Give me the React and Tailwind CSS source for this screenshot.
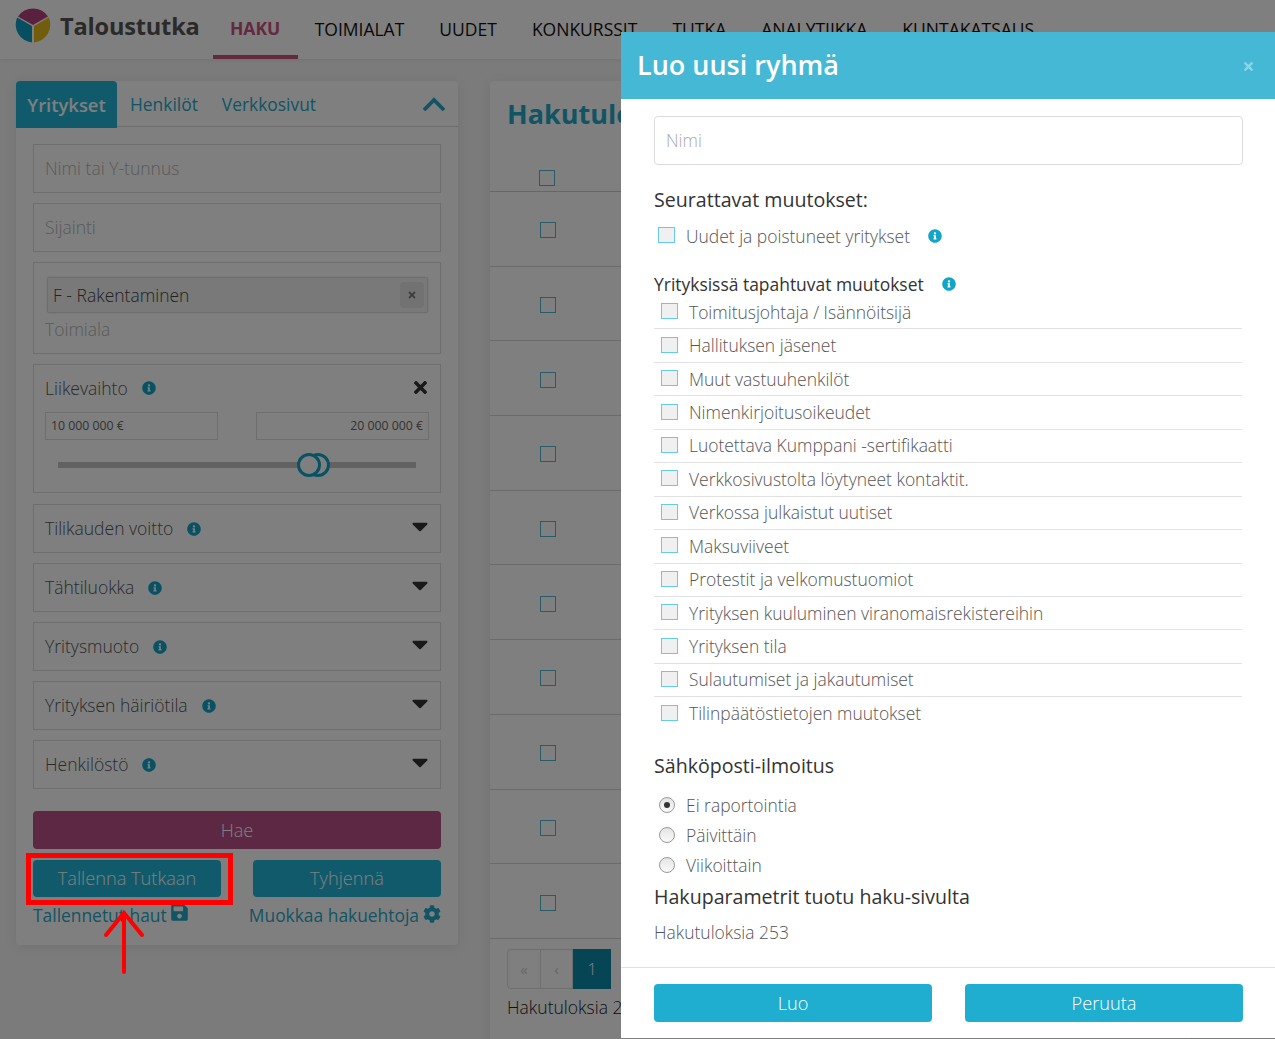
import { FaInfoCircle, FaCaretDown, FaTimes, FaSave, FaCog } from "react-icons/fa";

const navItems = ["TOIMIALAT", "UUDET", "KONKURSSIT", "TUTKA", "ANALYTIIKKA", "KUNTAKATSAUS"];
const filters = [
  { label: "Tilikauden voitto", cls: "h-[49px] mt-[11px]" },
  { label: "Tähtiluokka", cls: "h-[49px] mt-[10px]" },
  { label: "Yritysmuoto", cls: "h-[49px] mt-[10px]" },
  { label: "Yrityksen häiriötila", cls: "h-[49px] mt-[10px]" },
  { label: "Henkilöstö", cls: "h-[49px] mt-[10px]" },
];
const changes = [
  "Toimitusjohtaja / Isännöitsijä",
  "Hallituksen jäsenet",
  "Muut vastuuhenkilöt",
  "Nimenkirjoitusoikeudet",
  "Luotettava Kumppani -sertifikaatti",
  "Verkkosivustolta löytyneet kontaktit.",
  "Verkossa julkaistut uutiset",
  "Maksuviiveet",
  "Protestit ja velkomustuomiot",
  "Yrityksen kuuluminen viranomaisrekistereihin",
  "Yrityksen tila",
  "Sulautumiset ja jakautumiset",
  "Tilinpäätöstietojen muutokset",
];
const rows = Array.from({ length: 10 });
const font = "font-['Open_Sans','Liberation_Sans',sans-serif]";

function Logo() {
  return (
    <svg viewBox="0 0 36 36" className="w-[36px] h-[36px] shrink-0 -mt-[9px]">
      <path d="M3 9.5A18 18 0 0 1 33 9.5L18 18Z" fill="#b5437f" />
      <path d="M2.2 10.5A18 18 0 0 0 17 35.6V19Z" fill="#0f9ec0" />
      <path d="M33.8 10.5A18 18 0 0 1 19 35.6V19Z" fill="#e3bb17" />
    </svg>
  );
}

function FilterBox({ label, cls }) {
  return (
    <div className={`${cls} border border-[#dcdcdc] flex items-center justify-between pl-[11px] pr-[11px]`}>
      <div className="flex items-center gap-[14px]">
        <span className="text-[17.5px] font-light text-[#555]">{label}</span>
        <FaInfoCircle className="text-[#12a5c9] text-[14px]" />
      </div>
      <FaCaretDown className="text-[#333] text-[26px] -mt-[6px] -mr-[4px]" />
    </div>
  );
}

function Check({ cls }) {
  return <span className={`${cls} block w-[17px] h-[16px] border border-[#65cbe6] bg-[#f0f0f0] shrink-0`} />;
}

function Radio({ label, on }) {
  return (
    <div className="h-[30px] flex items-center pl-[5px]">
      <span className="w-[16px] h-[16px] rounded-full border border-[#999] bg-gradient-to-b from-[#e4e4e4] to-[#fafafa] flex items-center justify-center">
        {on && <span className="w-[6px] h-[6px] rounded-full bg-[#333]" />}
      </span>
      <span className="ml-[11px] text-[17.45px] font-light text-[#555]">{label}</span>
    </div>
  );
}

export default function App() {
  return (
    <div className={`${font} relative h-[1039px] w-[1275px] overflow-hidden bg-[#f6f6f6]`}>
      {/* NAV */}
      <header className="h-[59px] bg-white flex items-center pl-[15px] shadow-[0_1px_4px_rgba(0,0,0,0.08)]">
        <Logo />
        <span className="ml-[9px] -mt-[6px] text-[23.6px] font-bold text-[#555] tracking-[-0.2px]">Taloustutka</span>
        <nav className="ml-[13px] flex h-full">
          <a className="h-full w-[85px] flex items-center justify-center border-b-[4px] border-[#c9527f] pt-[2px] text-[17.5px] font-bold text-[#c9527f]">HAKU</a>
          <div className="flex items-center gap-[35px] ml-[17px] -mt-[1px]">
            {navItems.map((n) => (
              <a key={n} className="text-[17.5px] text-[#111]">{n}</a>
            ))}
          </div>
        </nav>
      </header>

      <div className="flex items-start pl-[16px] pt-[22px] gap-[32px]">
        {/* SEARCH PANEL */}
        <aside className="w-[442px] h-[864px] bg-white rounded-[4px] shadow-[0_2px_12px_rgba(0,0,0,0.08)]">
          <div className="h-[46px] border-b border-[#dcdcdc] flex items-stretch pr-[12px]">
            <div className="w-[101px] h-[47px] bg-[#22b4d6] rounded-t-[4px] flex items-center justify-center text-[18.4px] font-semibold text-white">Yritykset</div>
            <a className="ml-[13px] pt-[2px] flex items-center text-[17.4px] text-[#25a9c9] font-normal">Henkilöt</a>
            <a className="ml-[24px] pt-[2px] flex items-center text-[17.4px] text-[#25a9c9] font-normal">Verkkosivut</a>
            <svg viewBox="0 0 24 14" className="ml-auto w-[24px] h-[14px] self-center" fill="none" stroke="#25a9c9" strokeWidth="3.8">
              <path d="M2 13 12 3l10 10" />
            </svg>
          </div>

          <div className="px-[17px] pt-[17px]">
            <div className="h-[49px] border border-[#dcdcdc] flex items-center pl-[11px] text-[17.5px] font-light text-[#b4b4b4]">Nimi tai Y-tunnus</div>
            <div className="h-[49px] mt-[10px] border border-[#dcdcdc] flex items-center pl-[11px] text-[17.5px] font-light text-[#b4b4b4]">Sijainti</div>

            <div className="h-[92px] mt-[10px] border border-[#dcdcdc] pt-[14px] px-[11px]">
              <div className="h-[36px] ml-[2px] mr-[1px] bg-[#f2f2f2] border border-[#ddd] rounded-[2px] shadow-[0_0_2px_rgba(0,0,0,0.15)] flex items-center justify-between pl-[5px] pr-[3px]">
                <span className="text-[17.5px] font-light text-[#444]">F - Rakentaminen</span>
                <span className="w-[24px] h-[26px] bg-[#e4e4e4] rounded-[4px] flex items-center justify-center">
                  <FaTimes className="text-[#777] text-[10px]" />
                </span>
              </div>
              <div className="mt-[4px] text-[17.5px] leading-[24px] font-light text-[#b4b4b4]">Toimiala</div>
            </div>

            <div className="h-[129px] mt-[10px] border border-[#dcdcdc] px-[11px] pt-[9px]">
              <div className="flex items-center justify-between h-[28px]">
                <div className="flex items-center gap-[14px]">
                  <span className="text-[17.5px] font-light text-[#555]">Liikevaihto</span>
                  <FaInfoCircle className="text-[#12a5c9] text-[14px]" />
                </div>
                <FaTimes className="text-[#333] text-[19px] -mr-[1px] -mt-[2px]" />
              </div>
              <div className="flex justify-between mt-[10px]">
                <div className="w-[173px] h-[28px] border border-[#dcdcdc] flex items-center pl-[5px] pt-[1px] text-[12.3px] text-[#666]">10 000 000 €</div>
                <div className="w-[173px] h-[28px] border border-[#dcdcdc] flex items-center justify-end pr-[5px] pt-[1px] text-[12.3px] text-[#666]">20 000 000 €</div>
              </div>
              <div className="relative h-[6px] mt-[22px] mx-[13px] bg-[#c4c4c4]">
                <span className="absolute left-[248px] -top-[9px] w-[24px] h-[24px] rounded-full border-[3px] border-[#12a5c9] bg-white" />
                <span className="absolute left-[239px] -top-[9px] w-[24px] h-[24px] rounded-full border-[3px] border-[#12a5c9] bg-white" />
              </div>
            </div>

            {filters.map((f) => (
              <FilterBox key={f.label} {...f} />
            ))}

            <div className="h-[38px] mt-[22px] pt-[1px] bg-[#b85086] rounded-[4px] flex items-center justify-center text-[18.2px] font-light text-white">Hae</div>
            <div className="flex justify-between mt-[11px]">
              <div className="w-[188px] h-[37px] bg-[#22b4d6] rounded-[4px] flex items-center justify-center text-[18.2px] font-light text-white">Tallenna Tutkaan</div>
              <div className="w-[188px] h-[37px] bg-[#22b4d6] rounded-[4px] flex items-center justify-center text-[18.2px] font-light text-white">Tyhjennä</div>
            </div>
            <div className="flex justify-between mt-[5px] text-[17.4px] text-[#25a9c9] leading-[26px]">
              <span className="flex items-start gap-[3px]">Tallennetut haut <FaSave className="text-[19px] mt-[1px]" /></span>
              <span className="flex items-start gap-[4px]">Muokkaa hakuehtoja <FaCog className="text-[18px] mt-[3px]" /></span>
            </div>
          </div>
        </aside>

        {/* RESULTS */}
        <main className="w-[700px] h-[990px] bg-white rounded-[4px] shadow-[0_2px_12px_rgba(0,0,0,0.08)]">
          <h1 className="h-[64px] pl-[17px] pt-[13px] text-[27px] leading-[40px] font-bold text-[#22a9c9]">Hakutulokset</h1>
          <div className="h-[47px] border-b border-[#ccc] flex items-end pb-[5px] pl-[49px]">
            <span className="block w-[16px] h-[16px] border border-[#55b8d0]" />
          </div>
          {rows.map((_, i) => (
            <div key={i} className="h-[74.7px] border-b border-[#d6d6d6] flex items-center pl-[50px] pt-[3px]">
              <span className="block w-[16px] h-[16px] border border-[#55b8d0]" />
            </div>
          ))}
          <div className="mt-[10px] ml-[17px] flex h-[40px] w-[300px]">
            <span className="w-[34px] border border-[#ddd] rounded-l-[4px] flex items-center justify-center text-[15px] text-[#ccc]">«</span>
            <span className="w-[32px] border-y border-r border-[#ddd] flex items-center justify-center text-[15px] text-[#ccc]">‹</span>
            <span className="w-[38px] bg-[#0a8aa8] flex items-center justify-center text-[17px] font-light text-white">1</span>
          </div>
          <div className="mt-[5px] ml-[17px] text-[17.5px] font-light text-[#222]">Hakutuloksia 253</div>
        </main>
      </div>

      {/* OVERLAY */}
      <div className="absolute inset-0 bg-black/50" />

      {/* MODAL */}
      <section className="absolute left-[621px] top-[32px] w-[654px] h-[1006px] bg-white flex flex-col">
        <div className="h-[67px] shrink-0 bg-[#45b8d6] flex items-center justify-between pl-[16px] pr-[20px]">
          <h2 className="text-[27px] font-semibold text-white">Luo uusi ryhmä</h2>
          <FaTimes className="text-[#8fd4e6] text-[13px] mt-[2px]" />
        </div>

        <div className="flex-1 px-[33px] pt-[17px]">
          <div className="w-[589px] h-[49px] border border-[#dcdcdc] rounded-[4px] flex items-center pl-[11px] text-[17.45px] font-light text-[#aaa]">Nimi</div>

          <div className="mt-[20px] text-[19.6px] leading-[30px] text-[#333]">Seurattavat muutokset:</div>
          <div className="mt-[7px] h-[28px] flex items-center pl-[4px]">
            <Check cls="-mt-[2px]" />
            <span className="ml-[11px] text-[17.45px] font-light text-[#555]">Uudet ja poistuneet yritykset</span>
            <FaInfoCircle className="ml-[18px] text-[#12a5c9] text-[14px]" />
          </div>

          <div className="mt-[20px] flex items-center h-[28px]">
            <span className="text-[17.45px] text-[#333]">Yrityksissä tapahtuvat muutokset</span>
            <FaInfoCircle className="ml-[18px] text-[#12a5c9] text-[14px]" />
          </div>
          <div className="w-[588px] -mt-[2px]">
            {changes.map((c, i) => (
              <div key={c} className={`h-[33.45px] flex items-center pl-[7px] ${i < changes.length - 1 ? "border-b border-[#e2e2e2]" : ""}`}>
                <Check cls="-mt-[2px]" />
                <span className="ml-[11px] -mt-[1px] text-[17.45px] font-light text-[#555]">{c}</span>
              </div>
            ))}
          </div>

          <div className="mt-[20px] text-[19.6px] leading-[30px] text-[#333]">Sähköposti-ilmoitus</div>
          <div className="mt-[9px]">
            <Radio label="Ei raportointia" on />
            <Radio label="Päivittäin" />
            <Radio label="Viikoittain" />
          </div>
          <div className="mt-[2px] text-[19.6px] leading-[30px] text-[#333]">Hakuparametrit tuotu haku-sivulta</div>
          <div className="mt-[7px] text-[17.45px] font-light text-[#555]">Hakutuloksia 253</div>
        </div>

        <div className="h-[71px] shrink-0 border-t border-[#e2e2e2] flex justify-between px-[33px] pt-[16px] pr-[32px]">
          <button className="w-[278px] h-[38px] pt-[1px] bg-[#1fadd0] rounded-[4px] text-[18.2px] text-white font-light">Luo</button>
          <button className="w-[278px] h-[38px] pt-[1px] bg-[#1fadd0] rounded-[4px] text-[18.2px] text-white font-light">Peruuta</button>
        </div>
      </section>

      {/* RED ANNOTATION */}
      <div className="absolute left-[26px] top-[853px] w-[207px] h-[52px] border-[5px] border-[#ff0000]" />
      <svg className="absolute left-[100px] top-[908px] w-[48px] h-[70px]" viewBox="0 0 48 70" fill="none" stroke="#ff0000" strokeWidth="4" strokeLinecap="round">
        <path d="M24 64V5M6 27 24 5l18 22" />
      </svg>
    </div>
  );
}
